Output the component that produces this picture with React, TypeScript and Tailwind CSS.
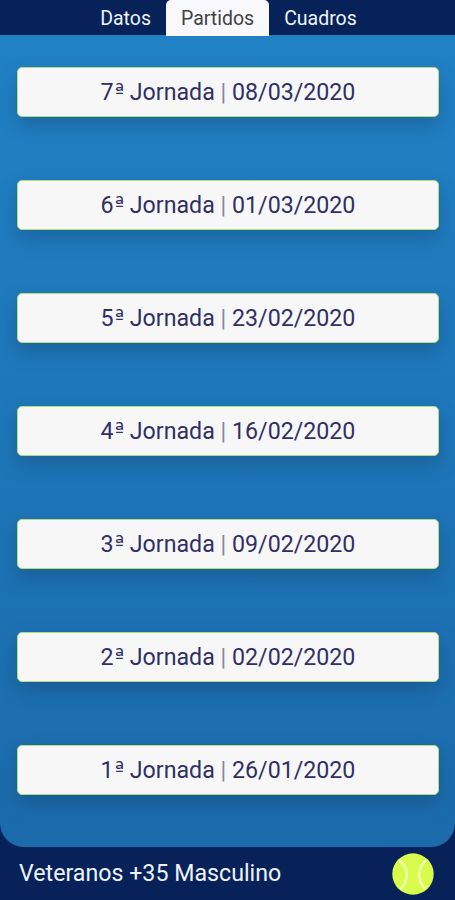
import React, { useState } from 'react';

interface Round {
    id: number;
    date: string;
}

const TABS = ['Datos', 'Partidos', 'Cuadros'];

const ROUNDS: Round[] = [
    { id: 7, date: '08/03/2020' },
    { id: 6, date: '01/03/2020' },
    { id: 5, date: '23/02/2020' },
    { id: 4, date: '16/02/2020' },
    { id: 3, date: '09/02/2020' },
    { id: 2, date: '02/02/2020' },
    { id: 1, date: '26/01/2020' },
];

const TennisBall: React.FC = () => (
    <svg className="w-[42px] h-[42px]" viewBox="0 0 42 42" fill="none">
        <circle cx="21" cy="21" r="20.7" fill="#d9fb4b" />
        <path d="M7.5 7C17 15 17 28 8.5 36M34.5 7C25 15 25 28 33.5 36" stroke="#f1ffb4" strokeWidth="2.4" />
    </svg>
);

const RoundCard: React.FC<{ round: Round }> = ({ round }) => (
    <button className="flex h-[50px] w-full items-center justify-center rounded-[5px] border border-[#b3dc7c] bg-[#f7f7f8] text-[23.2px] text-[#302f66] shadow-[0_9px_18px_rgba(20,60,100,0.35)]">
        <span className="whitespace-pre">
            {round.id}
            {/* Roboto's ordinal has no bar under it */}
            <span className="pl-[1px] align-[2px] font-['DejaVu_Sans',sans-serif] text-[20px] leading-none">ª</span>
            {' '}Jornada <span className="text-[#85849f]">|</span> {round.date}
        </span>
    </button>
);

export default function App() {
    const [activeTab, setActiveTab] = useState('Partidos');

    return (
        <div className="flex h-[900px] w-[455px] flex-col overflow-hidden bg-[#062259] font-['Roboto',sans-serif]">
            <nav className="z-10 flex h-[36px] shrink-0 justify-center bg-linear-to-b from-[#062259] from-[35px] to-[#2181c5] to-[35px] pl-[2px]">
                {TABS.map(tab => (
                    <button
                        key={tab}
                        onClick={() => setActiveTab(tab)}
                        className={`h-[36px] px-[15px] text-[19.5px] leading-[37px] ${
                            activeTab === tab ? 'rounded-t-[5px] bg-[#f9f9fd] text-[#424242]' : 'text-[#eef2fc]'
                        }`}
                    >
                        {tab}
                    </button>
                ))}
            </nav>

            <main className="flex h-[811px] shrink-0 flex-col justify-between rounded-b-[24px] bg-linear-to-b from-[#2181c5] to-[#1b6bab] pt-[31px] pr-[16px] pb-[52px] pl-[17px]">
                {ROUNDS.map(round => (
                    <RoundCard key={round.id} round={round} />
                ))}
            </main>

            <footer className="flex h-[53px] shrink-0 items-center justify-between pr-[21px] pl-[19px] text-[23.2px] text-[#eef2fc]">
                <span>Veteranos +35 Masculino</span>
                <TennisBall />
            </footer>
        </div>
    );
}
